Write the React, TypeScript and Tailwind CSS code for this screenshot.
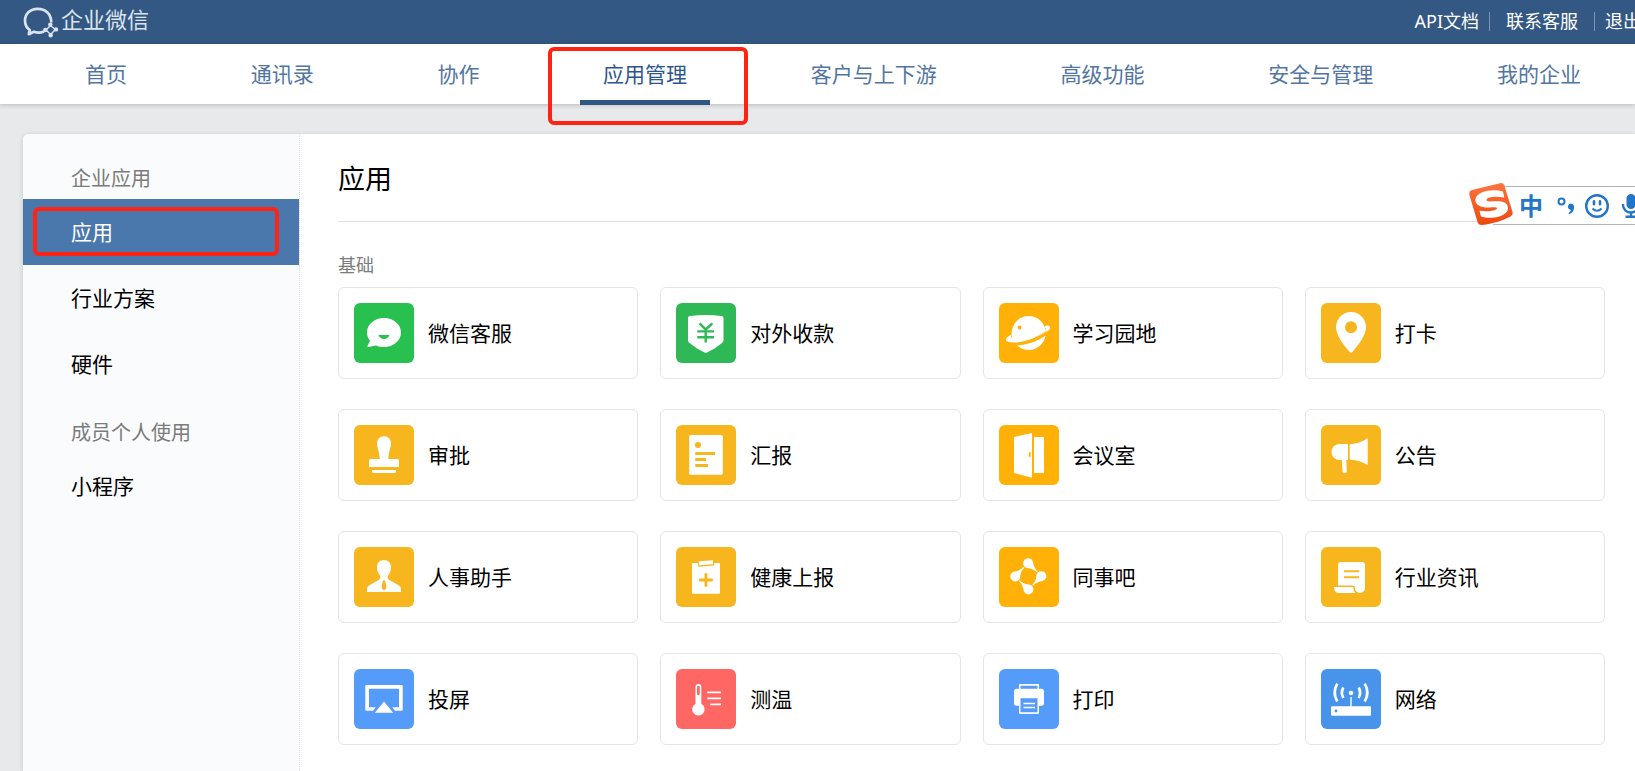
import type { ReactNode } from "react";

const navItems = ["首页", "通讯录", "协作", "应用管理", "客户与上下游", "高级功能", "安全与管理", "我的企业"];
const activeNav = "应用管理";

const GREEN = "#28c04f";
const GREEN_PAY = "#2eb956";
const YELLOW = "#f7b51e";
const AMBER = "#ffb107";
const BLUE = "#549bfa";
const BLUE_NET = "#4894ea";
const RED = "#ff6765";

type AppEntry = { name: string; color: string; glyph: ReactNode };

const drop = "M24.6 18.3A5 5 0 1 1 34 15C34.3 18.6 36 21.6 38.6 24.6L37.8 25.4C34.5 21.8 31.8 21.6 28.8 21.2C26.8 21 25.2 20 24.6 18.3Z";

const apps: AppEntry[] = [
  {
    name: "微信客服",
    color: GREEN,
    glyph: (
      <>
        <path d="M30 15C39.5 15 47 21.200 47 29.500S39.500 44 30 44C27 44 24.500 43.500 22 42.500C19.500 42.700 17 43.500 14.600 44C13.600 44.100 13.200 43.600 13.600 42.800L16 37.800C14 35.500 13 32.500 13 29.500C13 21.200 20.500 15 30 15Z" />
        <path d="M24.500 32H35.500C34.500 34.600 32.500 36 30 36S25.500 34.600 24.500 32Z" fill={GREEN} />
      </>
    ),
  },
  {
    name: "对外收款",
    color: GREEN_PAY,
    glyph: (
      <>
        <path d="M12 15Q12 13.200 14 13Q30 11 45.500 13Q47.500 13.200 47.500 15V37Q47.500 39 46 40C41 44 36 47.200 31 49.500Q29.700 50 28.500 49.500C23.500 47.200 18.500 44 13.500 40Q12 39 12 37Z" />
        <path d="M23.600 20.300L29.700 26.500L36.400 20.300M29.700 26.500V39.500M21.300 28.400H38M21.300 34.200H38" fill="none" stroke={GREEN_PAY} strokeWidth="2.400" />
      </>
    ),
  },
  {
    name: "学习园地",
    color: AMBER,
    glyph: (
      <>
        <circle cx="29.700" cy="30" r="17" />
        <path d="M10 40C24 42.500 39 36.500 48.500 28.500" fill="none" stroke={AMBER} strokeWidth="4" />
        <path d="M8 31.500L13 32L12.500 37L17.500 42.500L10 43Z" fill={AMBER} />
        <path d="M45.200 24.200C46.500 22.500 49.500 22 50.700 23.500C51.700 25 50.500 27 48.500 28.200C39 34 22 41.500 9.500 39C6.500 38.200 6.300 35.800 8.300 34.200C10 32.700 12 31.600 14 31C11.500 33 11.500 34.500 14 35.200C21 37 39 32.500 45.800 27.500C47.300 26.300 47.200 25.200 45.200 24.200Z" />
        <path d="M13 29L45 24L46 27L38 33L14 36Z" />
        <path d="M36 34.500C40.500 32.500 45 30.200 48 27.600" fill="none" stroke={AMBER} strokeWidth="0.700" />
        <circle cx="20.500" cy="24.500" r="1.900" fill={AMBER} />
      </>
    ),
  },
  {
    name: "打卡",
    color: YELLOW,
    glyph: (
      <path fillRule="evenodd" d="M30 9A15 15 0 0 1 45 24C45 33 36.500 43 30.800 49.500Q30 50.300 29.200 49.500C23.500 43 15 33 15 24A15 15 0 0 1 30 9ZM30 18.300A6 6 0 1 0 30 30.300A6 6 0 1 0 30 18.300Z" />
    ),
  },
  {
    name: "审批",
    color: YELLOW,
    glyph: (
      <>
        <path d="M30 11.200C34 11.200 37 14.200 37 18C37 22.500 34.500 27 34.300 34H43.500Q45 34 45 35.500V42H15V35.500Q15 34 16.500 34H25.700C25.500 27 23 22.500 23 18C23 14.200 26 11.200 30 11.200Z" />
        <path d="M18 45H42V47Q42 48 41 48H19Q18 48 18 47Z" />
      </>
    ),
  },
  {
    name: "汇报",
    color: YELLOW,
    glyph: (
      <>
        <rect x="13.200" y="10" width="33.600" height="39.800" rx="1.500" />
        <circle cx="22" cy="20" r="3" fill={YELLOW} />
        <path d="M19.300 28.500H39M19.300 34.500H30M19.300 40.500H32" stroke={YELLOW} strokeWidth="3" />
      </>
    ),
  },
  {
    name: "会议室",
    color: AMBER,
    glyph: (
      <>
        <path d="M15 12L33 8V52.700L15 48ZM35 12H45V48H35Z" />
        <path d="M31.300 27V31.500H30V28Z" fill={AMBER} stroke={AMBER} strokeWidth="0.500" />
      </>
    ),
  },
  {
    name: "公告",
    color: YELLOW,
    glyph: (
      <>
        <path d="M18.500 19H27V35H18.500A8 8 0 0 1 18.500 19Z" />
        <path d="M28.700 19.300C34.500 19 40.500 17.300 46.700 13.300V40C40.500 36.500 34.500 34.700 28.700 34.700Z" />
        <path d="M20.800 35H25.300L25.800 46.500Q25.800 47.700 24.500 47.700H22.800Q21.600 47.700 21.600 46.500Z" />
      </>
    ),
  },
  {
    name: "人事助手",
    color: YELLOW,
    glyph: (
      <>
        <path d="M30 13C34.500 13 37 16 37 20C37 24.500 35.500 26.700 34 28.500C33.300 30.500 33.500 31.800 35 32.700L45 38.500Q47 39.800 47 42V45H13V42Q13 39.800 15 38.500L25 32.700C26.500 31.800 26.700 30.500 26 28.500C24.500 26.700 23 24.500 23 20C23 16 25.500 13 30 13Z" />
        <path d="M28.800 33.500H31.200L32.500 41L30 43.500L27.500 41Z" fill={YELLOW} />
      </>
    ),
  },
  {
    name: "健康上报",
    color: YELLOW,
    glyph: (
      <>
        <rect x="16" y="16" width="28" height="30.800" rx="1" />
        <path d="M21.800 14.500H38.200V18.500L22.500 19.800Z" fill={YELLOW} />
        <path d="M22.800 14.300L37 13.300V17.300L23.200 18.300Z" />
        <path d="M30 26.200V39.800M23.200 33H36.800" stroke={YELLOW} strokeWidth="2.800" />
      </>
    ),
  },
  {
    name: "同事吧",
    color: AMBER,
    glyph: (
      <>
        <path d={drop} />
        <path d={drop} transform="rotate(90 29.300 29.300)" />
        <path d={drop} transform="rotate(180 29.300 29.300)" />
        <path d={drop} transform="rotate(270 29.300 29.300)" />
      </>
    ),
  },
  {
    name: "行业资讯",
    color: YELLOW,
    glyph: (
      <>
        <path d="M20 15H41Q44 15 44 18V41A5 5 0 0 1 34 41C34 39.500 33 38.500 31.500 38.500H17V18Q17 15 20 15Z" />
        <path d="M13 40H32.300C32.300 42.500 33 44.500 34.500 46H17.500Q13 45.500 13 40Z" />
        <path d="M23 24.200H38M23 30.200H38" stroke={YELLOW} strokeWidth="2" />
      </>
    ),
  },
  {
    name: "投屏",
    color: BLUE,
    glyph: (
      <>
        <path fillRule="evenodd" d="M12.300 16H47.700Q48.700 16 48.700 17V40.700Q48.700 41.700 47.700 41.700H41L38.300 38.300H45V19.700H15V38.300H21.700L19 41.700H12.300Q11.300 41.700 11.300 40.700V17Q11.300 16 12.300 16Z" />
        <path d="M30 32.500L39.200 43.800H20.800Z" />
      </>
    ),
  },
  {
    name: "测温",
    color: RED,
    glyph: (
      <>
        <path d="M19.500 17.800A2.900 2.900 0 0 1 25.300 17.800V34.800A6.200 6.200 0 1 1 19.500 34.800Z" />
        <rect x="21" y="17" width="2.800" height="9" rx="1" fill={RED} />
        <path d="M31.300 23.300H45M31.300 29.300H45M34.300 35.300H45" stroke="white" strokeWidth="1.700" />
      </>
    ),
  },
  {
    name: "打印",
    color: BLUE,
    glyph: (
      <>
        <path fillRule="evenodd" d="M21 15H39Q40 15 40 16V19.700H42.500Q45 19.700 45 22.200V34.200Q45 36.700 42.500 36.700H40V43.500Q40 45 38.500 45H21.500Q20 45 20 43.500V36.700H17.500Q15 36.700 15 34.200V22.200Q15 19.700 17.500 19.700H20V16Q20 15 21 15ZM21.500 16.700V19.700H38.500V16.700ZM21.500 29.300V43.300H38.500V29.300Z" />
        <path d="M24.500 34.500H36M24.500 38.500H36" stroke="white" strokeWidth="1.500" />
      </>
    ),
  },
  {
    name: "网络",
    color: BLUE_NET,
    glyph: (
      <>
        <rect x="10" y="37.300" width="40" height="9.400" rx="1.200" />
        <path d="M30 28V38" stroke="white" strokeWidth="1.400" />
        <circle cx="30" cy="24" r="2.300" />
        <circle cx="15" cy="42" r="1.400" fill={BLUE_NET} />
        <path d="M22.300 18.500Q19.500 23.500 22.300 29M37.700 18.500Q40.500 23.500 37.700 29M16.300 14.600Q11 23.500 16.300 32.500M43.700 14.600Q49 23.500 43.700 32.500" fill="none" stroke="white" strokeWidth="2.700" />
      </>
    ),
  },
];

function BrandMark() {
  return (
    <svg viewBox="0 0 36 32" className="h-8 w-9" fill="none" stroke="#dae3ee" aria-hidden="true">
      <path d="M28.300 16.500C28.300 8 22.500 2.800 14.700 2.800S2 8 2 14.500C2 18.500 3.800 22 6.800 24.200L5.800 28.200L10.800 25.800C14.500 27 18 26.700 21 25.500" strokeWidth="2.700" strokeLinejoin="round" />
      <path d="M27.500 19.500L32.300 23.500L27.700 28.500L23 24Z" strokeWidth="1.400" />
      <g fill="#dae3ee" stroke="none">
        <circle cx="27.300" cy="18.600" r="2.200" />
        <circle cx="33" cy="23.400" r="2.200" />
        <circle cx="27.700" cy="29.200" r="2.200" />
        <circle cx="22.300" cy="24" r="2.200" />
      </g>
    </svg>
  );
}

function SideLink({ label }: { label: string }) {
  return (
    <a href="#" className="flex h-[66px] items-center pt-0.5 pl-12 text-[21px] text-black">
      {label}
    </a>
  );
}

function InputMethodBar() {
  return (
    <div className="absolute top-[182px] right-0 h-11 w-[166px] overflow-hidden">
      <div className="mt-1 ml-6 flex h-[39px] items-center border-y border-[#b2b3bf] bg-white pl-[26px] text-[#2276c9]">
        <button type="button" className="w-6 shrink-0 text-[24px] leading-6 font-bold">中</button>
        <button type="button" aria-label="标点" className="ml-[14px] shrink-0">
          <svg viewBox="0 0 18 18" className="size-[18px]">
            <circle cx="4.500" cy="4.500" r="3" fill="none" stroke="currentColor" strokeWidth="2" />
            <path d="M11 10A3 3 0 1 1 17 9.500C17.300 13 15.500 16 12 17.300L11.500 16C13 15 13.700 14 13.700 12.700C12 12.500 11 11.500 11 10Z" fill="currentColor" />
          </svg>
        </button>
        <button type="button" aria-label="表情" className="ml-[10px] shrink-0">
          <svg viewBox="0 0 24 24" className="size-6" fill="none" stroke="currentColor">
            <circle cx="12" cy="12" r="10.800" strokeWidth="2.400" />
            <path d="M9 7.300V10.300M15 7.300V10.300" strokeWidth="2.600" strokeLinecap="round" />
            <path d="M7.500 14.500Q12 19 16.500 14.500" strokeWidth="2" />
          </svg>
        </button>
        <button type="button" aria-label="语音" className="ml-3 shrink-0">
          <svg viewBox="0 0 20 24" className="h-6 w-5" fill="none" stroke="currentColor">
            <rect x="5.500" y="0" width="9" height="15" rx="4.500" fill="currentColor" stroke="none" />
            <path d="M2 10V11A8 7.500 0 0 0 18 11V10M10 18V22M4.500 22.700H15.500" strokeWidth="2.400" />
          </svg>
        </button>
      </div>
      <svg viewBox="0 0 44 44" className="absolute top-0 left-0 size-11" aria-hidden="true">
        <defs>
          <linearGradient id="sogou" x1="0" y1="0" x2="0" y2="1">
            <stop offset="0" stopColor="#fb7640" />
            <stop offset="1" stopColor="#ee480c" />
          </linearGradient>
        </defs>
        <path d="M3 8L31 1.200Q34.500 0.500 35.500 4L43.500 30Q44.300 33 41.500 34.500C33 39 24 41.500 13 43Q9.500 43.300 8.500 40L0.400 13Q-0.300 9 3 8Z" fill="url(#sogou)" />
        <path d="M34 9.500C25 6.500 7.500 8.500 6.300 17.500C6 23.500 13 26 21 25.500C26 25 28 25.300 28 26.300C27.500 28.700 19 30 10.500 28.800L12 34.500C22 38 38.500 34.500 39 26.500C39.500 20 32.500 18.800 25 19.300C20 19.600 17.500 19.500 17.500 18C18 15 26 14 35.300 15.500Z" fill="white" />
      </svg>
    </div>
  );
}

export default function App() {
  return (
    <div className="relative flex min-h-screen flex-col overflow-x-hidden bg-[#e8e9eb] font-['Noto_Sans','Noto_Sans_CJK_SC',sans-serif]">
      <header className="flex h-11 items-center justify-between bg-[#335883] pl-[23px] text-white">
        <a href="#" className="flex items-center gap-0.5 text-[22px] leading-6 text-[#dae3ee]">
          <BrandMark />
          <span className="pb-1.5">企业微信</span>
        </a>
        <div className="-mr-1.5 flex shrink-0 items-center pb-0.5 text-[18px] leading-6 whitespace-nowrap">
          <a href="#">API文档</a>
          <span className="mr-4 ml-[10px] h-[19px] w-px bg-[#7e93ad]" />
          <a href="#">联系客服</a>
          <span className="mr-[10px] ml-4 h-[19px] w-px bg-[#7e93ad]" />
          <a href="#">退出</a>
        </div>
      </header>

      <nav className="relative flex h-15 justify-between bg-white pr-[31px] pl-[62px] text-[21px] whitespace-nowrap text-[#5275a2] shadow-[0_1px_5px_rgba(0,0,0,0.2)]">
        {navItems.map((item) =>
          item === activeNav ? (
            <a key={item} href="#" aria-current="page" className="relative flex items-center px-[23px] pt-0.5 text-[#2e568c]">
              {item}
              <span className="absolute inset-x-0 -bottom-px h-[5px] bg-[#2d5684]" />
              <span className="pointer-events-none absolute top-[3px] -right-[38px] -bottom-[21px] -left-8 rounded-md border-4 border-[#ff2314]" />
            </a>
          ) : (
            <a key={item} href="#" className="flex items-center px-[23px] pt-0.5">
              {item}
            </a>
          ),
        )}
      </nav>

      <div className="mt-[30px] ml-[23px] flex flex-1 rounded-tl-md bg-white shadow-[0_1px_5px_rgba(0,0,0,0.15)]">
        <aside className="w-[277px] shrink-0 rounded-tl-md border-r border-dotted border-[#dcdfe3] bg-[#fafbfd] pt-[23px]">
          <h2 className="flex h-[42px] items-center pt-0.5 pl-12 text-[20px] text-[#7b7b7b]">企业应用</h2>
          <a href="#" aria-current="page" className="relative flex h-[66px] items-center bg-[#4a78ad] pt-0.5 pl-12 text-[21px] text-white">
            应用
            <span className="pointer-events-none absolute top-2 right-5 bottom-[9px] left-[10px] rounded-md border-4 border-[#ff2314]" />
          </a>
          <SideLink label="行业方案" />
          <SideLink label="硬件" />
          <h2 className="mt-[14px] flex h-[42px] items-center pt-0.5 pl-12 text-[20px] text-[#7b7b7b]">成员个人使用</h2>
          <SideLink label="小程序" />
        </aside>

        <main className="min-w-0 flex-1 pr-[30px] pl-[38px]">
          <h1 className="flex h-[88px] items-center border-b border-[#e0e1e3] pt-[3px] text-[27px] text-black">应用</h1>
          <h2 className="mt-[30px] h-[35px] text-[18px] leading-[27px] text-[#7b7b7b]">基础</h2>
          <div className="grid grid-cols-4 gap-x-[22px] gap-y-[30px]">
            {apps.map((app) => (
              <a key={app.name} href="#" className="flex h-[92px] items-center rounded-md border border-[#e4e5e8] bg-white pl-[15px] text-[21px] text-black">
                <svg viewBox="0 0 60 60" className="size-15 shrink-0" fill="white" aria-hidden="true">
                  <rect width="60" height="60" rx="6" fill={app.color} />
                  {app.glyph}
                </svg>
                <span className="ml-[14px] pt-0.5">{app.name}</span>
              </a>
            ))}
          </div>
        </main>
      </div>

      <InputMethodBar />
    </div>
  );
}
